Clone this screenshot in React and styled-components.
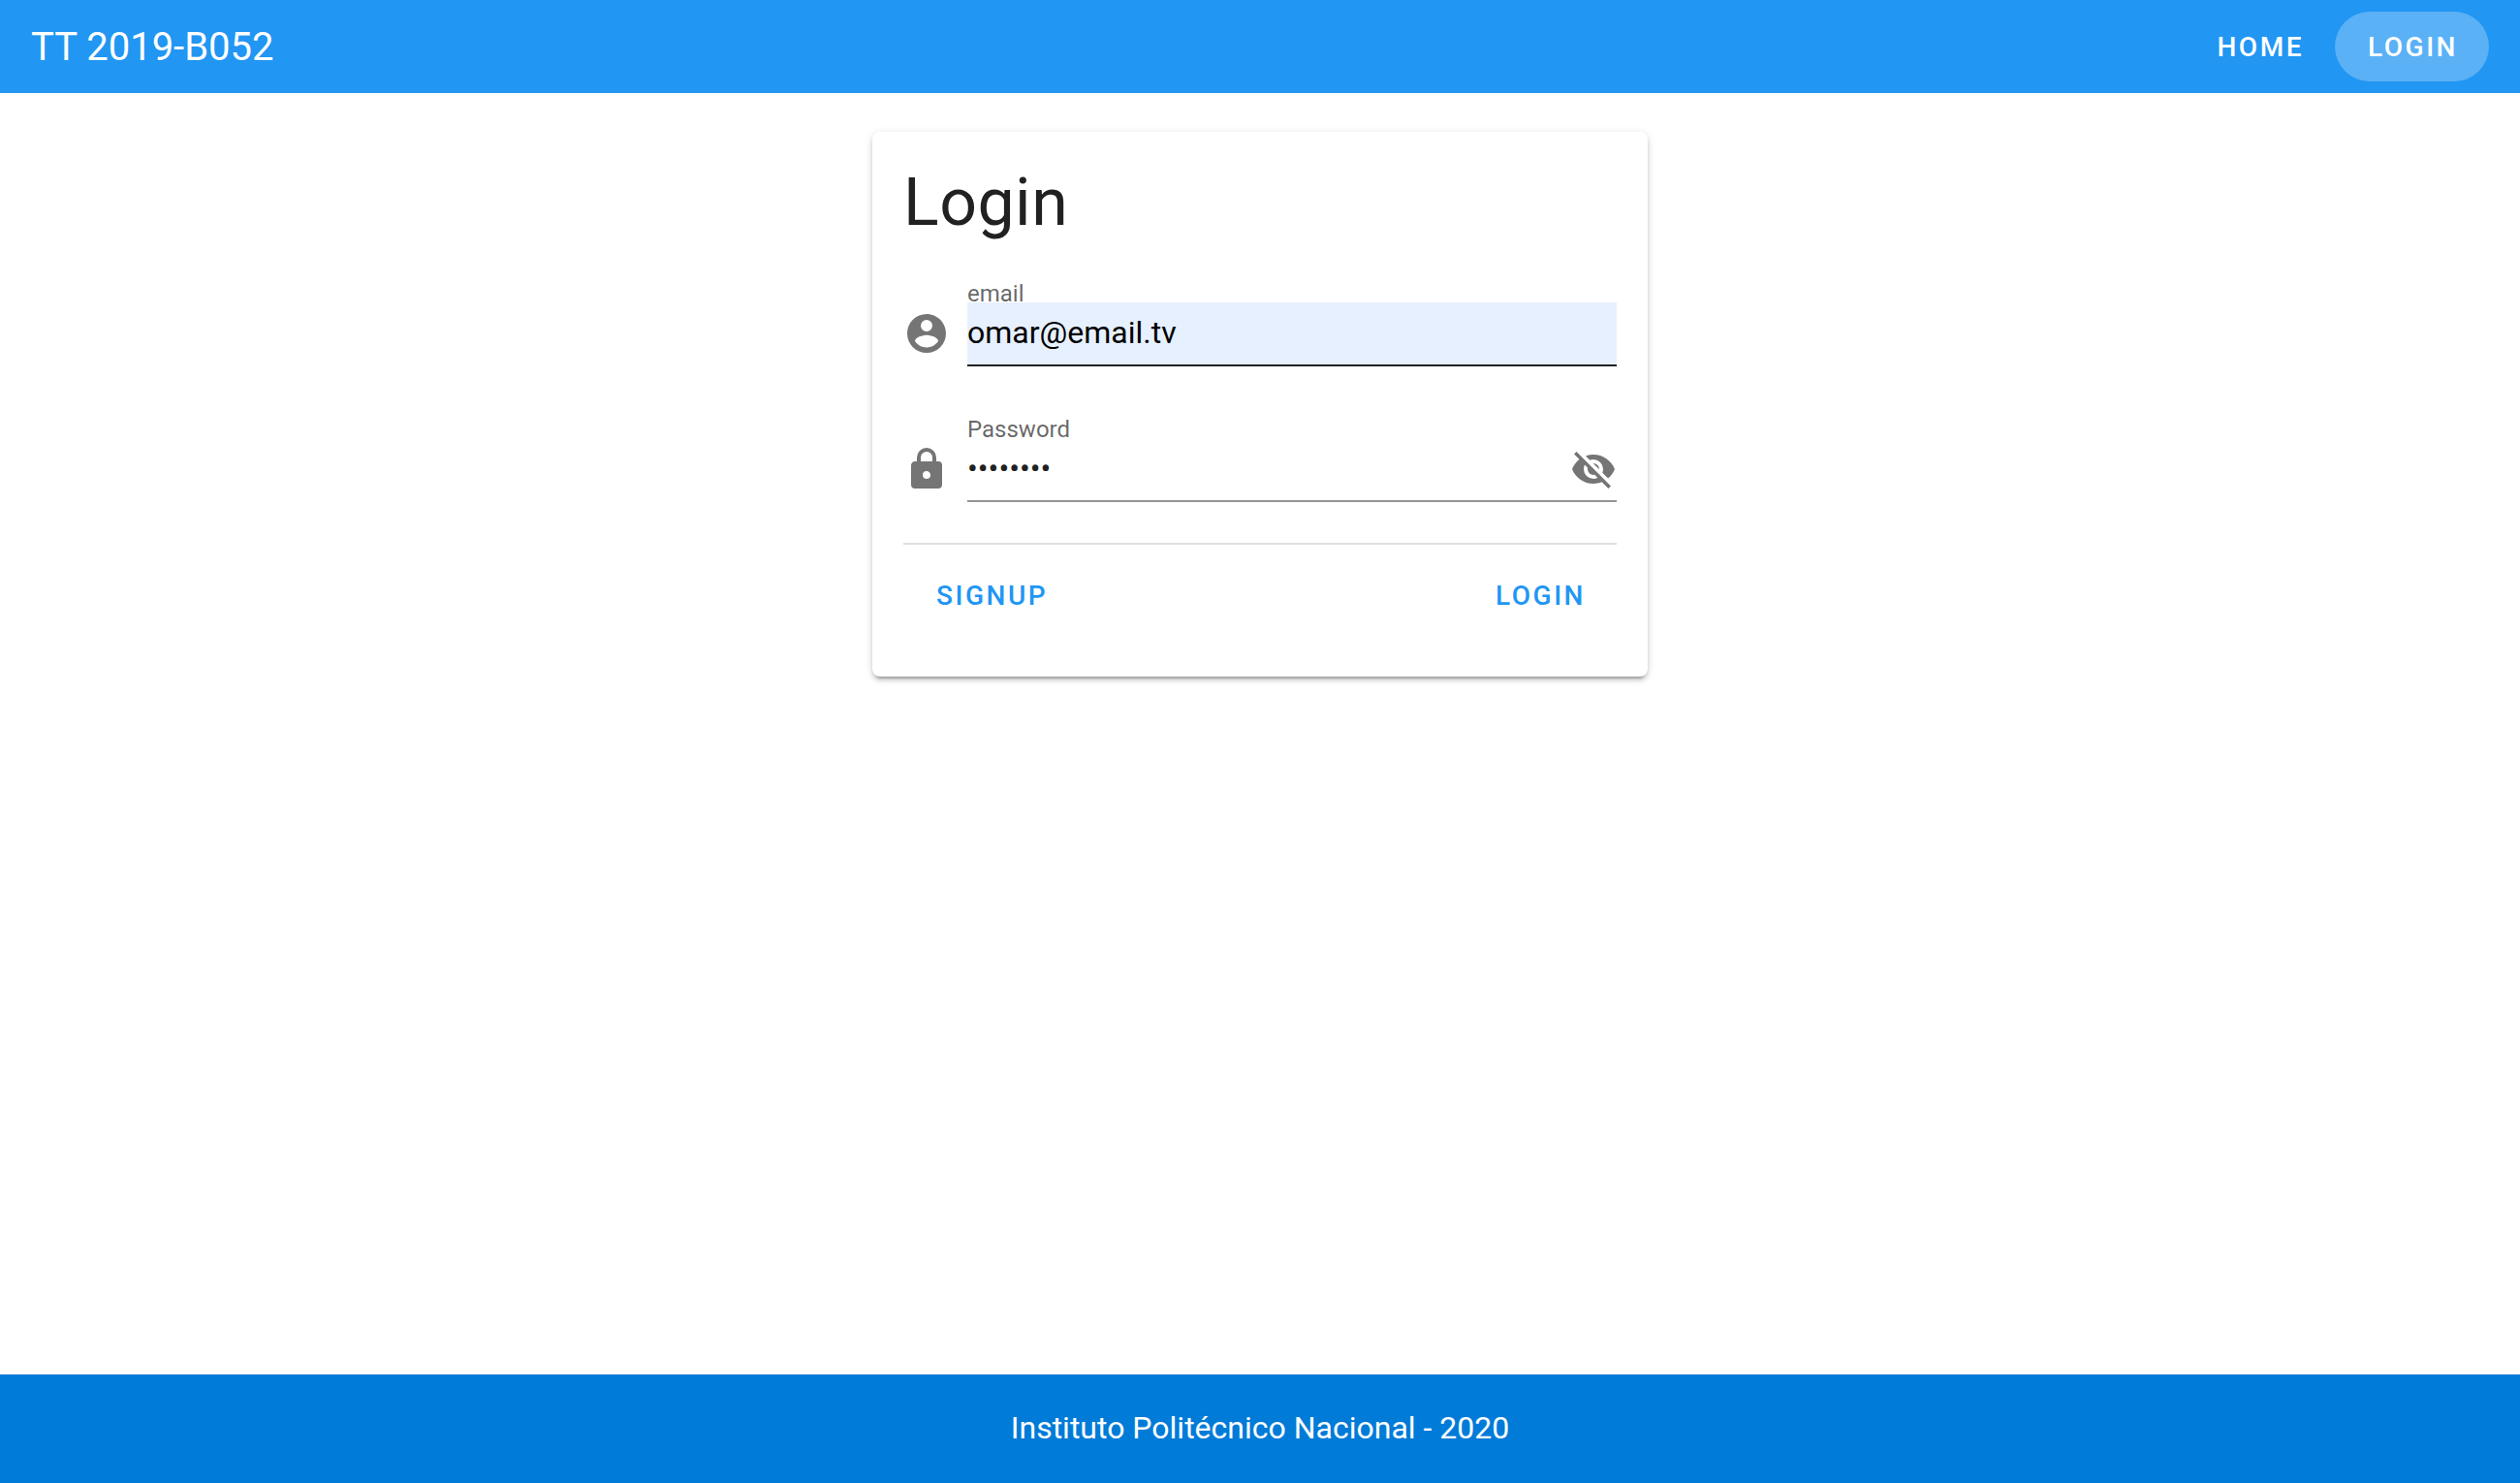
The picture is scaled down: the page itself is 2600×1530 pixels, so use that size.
import React, { useState } from "react";
import styled, { createGlobalStyle, css } from "styled-components";

const GlobalStyle = createGlobalStyle`
  *, *::before, *::after { box-sizing: border-box; }
  body {
    margin: 0;
    background: #ffffff;
    color: rgba(0, 0, 0, 0.87);
    font-family: Roboto, "Liberation Sans", sans-serif;
    font-size: 32px;
    line-height: 48px;
  }
`;

const buttonText = css`
  padding: 2px 32px 0 34px;
  font-family: inherit;
  font-size: 28px;
  font-weight: 500;
  line-height: 70px;
  letter-spacing: 0.09em;
  text-transform: uppercase;
`;

const Page = styled.div`
  display: flex;
  flex-direction: column;
  min-height: 100vh;
`;

const Toolbar = styled.header`
  display: flex;
  align-items: center;
  justify-content: space-between;
  padding: 12px 32px;
  background: #2196f3;
  color: #ffffff;
`;

const Brand = styled.div`
  padding-top: 2px;
  font-size: 40px;
  line-height: 60px;
`;

const Nav = styled.nav`
  display: flex;
`;

const NavLink = styled.a`
  ${buttonText}
  border-radius: 36px;
  background: ${(p) => (p.$active ? "rgba(255, 255, 255, 0.26)" : "transparent")};
  color: inherit;
  text-decoration: none;
`;

const Main = styled.main`
  flex: 1;
  padding: 40px 32px;
`;

const Card = styled.section`
  max-width: 800px;
  margin: 0 auto;
  padding: 32px;
  border-radius: 8px;
  background: #ffffff;
  box-shadow:
    0 6px 2px -4px rgba(0, 0, 0, 0.2),
    0 4px 4px 0 rgba(0, 0, 0, 0.14),
    0 2px 10px 0 rgba(0, 0, 0, 0.12);
`;

const Title = styled.h1`
  margin: 0;
  padding-top: 2px;
  font-size: 68px;
  font-weight: 400;
  line-height: 78px;
  letter-spacing: 0.0074em;
`;

const Fields = styled.div`
  display: flex;
  flex-direction: column;
  gap: 56px;
  padding: 46px 0 42px;
`;

const FieldGrid = styled.div`
  display: grid;
  grid-template-columns: 48px 1fr;
  column-gap: 18px;
  align-items: center;
`;

const Label = styled.label`
  grid-column: 2;
  color: rgba(0, 0, 0, 0.6);
  font-size: 24px;
  line-height: 18px;
`;

const Glyph = styled.svg`
  display: block;
  width: 48px;
  height: 48px;
  fill: #757575;
`;

const IconCell = styled.div`
  grid-column: 1;
  padding-bottom: 2px;
`;

const Control = styled.div`
  display: flex;
  align-items: center;
  border-bottom: 2px solid ${(p) => (p.$filled ? "#212121" : "#949494")};
  background: ${(p) => (p.$filled ? "#e6f0ff" : "transparent")};
`;

const Input = styled.input`
  flex: 1;
  min-width: 0;
  height: 64px;
  padding: 0 0 2px;
  border: 0;
  outline: 0;
  background: transparent;
  color: ${(p) => (p.$filled ? "#000000" : "#212121")};
  font: inherit;
`;

const IconButton = styled.button`
  padding: 0;
  border: 0;
  background: transparent;
  cursor: pointer;
`;

const Actions = styled.div`
  display: flex;
  justify-content: space-between;
  padding: 16px 0;
  border-top: 2px solid #e0e0e0;
`;

const TextButton = styled.button`
  ${buttonText}
  border: 0;
  border-radius: 8px;
  background: transparent;
  color: #2196f3;
  cursor: pointer;
`;

const Footer = styled.footer`
  padding: 31px 32px 33px;
  background: #007bd8;
  color: #ffffff;
  text-align: center;
`;

const ICONS = {
  account:
    "M12,19.2C9.5,19.2 7.29,17.92 6,16C6.03,14 10,12.9 12,12.9C14,12.9 17.97,14 18,16C16.71,17.92 14.5,19.2 12,19.2M12,5A3,3 0 0,1 15,8A3,3 0 0,1 12,11A3,3 0 0,1 9,8A3,3 0 0,1 12,5M12,2A10,10 0 0,0 2,12A10,10 0 0,0 12,22A10,10 0 0,0 22,12C22,6.47 17.5,2 12,2Z",
  lock:
    "M12,17A2,2 0 0,0 14,15C14,13.89 13.1,13 12,13A2,2 0 0,0 10,15A2,2 0 0,0 12,17M18,8A2,2 0 0,1 20,10V20A2,2 0 0,1 18,22H6A2,2 0 0,1 4,20V10C4,8.89 4.9,8 6,8H7V6A5,5 0 0,1 12,1A5,5 0 0,1 17,6V8H18M12,3A3,3 0 0,0 9,6V8H15V6A3,3 0 0,0 12,3Z",
  eye:
    "M12,9A3,3 0 0,0 9,12A3,3 0 0,0 12,15A3,3 0 0,0 15,12A3,3 0 0,0 12,9M12,17A5,5 0 0,1 7,12A5,5 0 0,1 12,7A5,5 0 0,1 17,12A5,5 0 0,1 12,17M12,4.5C7,4.5 2.73,7.61 1,12C2.73,16.39 7,19.5 12,19.5C17,19.5 21.27,16.39 23,12C21.27,7.61 17,4.5 12,4.5Z",
  eyeOff:
    "M11.83,9L15,12.16C15,12.11 15,12.05 15,12A3,3 0 0,0 12,9C11.94,9 11.89,9 11.83,9M7.53,9.8L9.08,11.35C9.03,11.56 9,11.77 9,12A3,3 0 0,0 12,15C12.22,15 12.44,14.97 12.65,14.92L14.2,16.47C13.53,16.8 12.79,17 12,17A5,5 0 0,1 7,12C7,11.21 7.2,10.47 7.53,9.8M2,4.27L4.28,6.55L4.73,7C3.08,8.3 1.78,10 1,12C2.73,16.39 7,19.5 12,19.5C13.55,19.5 15.03,19.2 16.38,18.66L16.81,19.08L19.73,22L21,20.73L3.27,3M12,7A5,5 0 0,1 17,12C17,12.64 16.87,13.26 16.64,13.82L19.57,16.75C21.07,15.5 22.27,13.86 23,12C21.27,7.61 17,4.5 12,4.5C10.6,4.5 9.26,4.75 8,5.2L10.17,7.35C10.74,7.13 11.35,7 12,7Z",
};

function Icon({ name }) {
  return (
    <Glyph viewBox="0 0 24 24" aria-hidden="true">
      <path d={ICONS[name]} />
    </Glyph>
  );
}

function Field({ id, label, icon, filled, children, ...input }) {
  return (
    <FieldGrid>
      <Label htmlFor={id}>{label}</Label>
      <IconCell>
        <Icon name={icon} />
      </IconCell>
      <Control $filled={filled}>
        <Input id={id} $filled={filled} {...input} />
        {children}
      </Control>
    </FieldGrid>
  );
}

export default function App() {
  const [email, setEmail] = useState("omar@email.tv");
  const [password, setPassword] = useState("password");
  const [visible, setVisible] = useState(false);

  return (
    <>
      <GlobalStyle />
      <Page>
        <Toolbar>
          <Brand>TT 2019-B052</Brand>
          <Nav>
            <NavLink href="#home">Home</NavLink>
            <NavLink href="#login" $active aria-current="page">
              Login
            </NavLink>
          </Nav>
        </Toolbar>
        <Main>
          <Card>
            <Title>Login</Title>
            <form onSubmit={(e) => e.preventDefault()}>
              <Fields>
                <Field
                  id="email"
                  label="email"
                  icon="account"
                  type="text"
                  filled
                  value={email}
                  onChange={(e) => setEmail(e.target.value)}
                />
                <Field
                  id="password"
                  label="Password"
                  icon="lock"
                  type={visible ? "text" : "password"}
                  value={password}
                  onChange={(e) => setPassword(e.target.value)}
                >
                  <IconButton
                    type="button"
                    aria-label={visible ? "Hide password" : "Show password"}
                    onClick={() => setVisible(!visible)}
                  >
                    <Icon name={visible ? "eye" : "eyeOff"} />
                  </IconButton>
                </Field>
              </Fields>
              <Actions>
                <TextButton type="button">Signup</TextButton>
                <TextButton type="submit">Login</TextButton>
              </Actions>
            </form>
          </Card>
        </Main>
        <Footer>Instituto Politécnico Nacional - 2020</Footer>
      </Page>
    </>
  );
}
